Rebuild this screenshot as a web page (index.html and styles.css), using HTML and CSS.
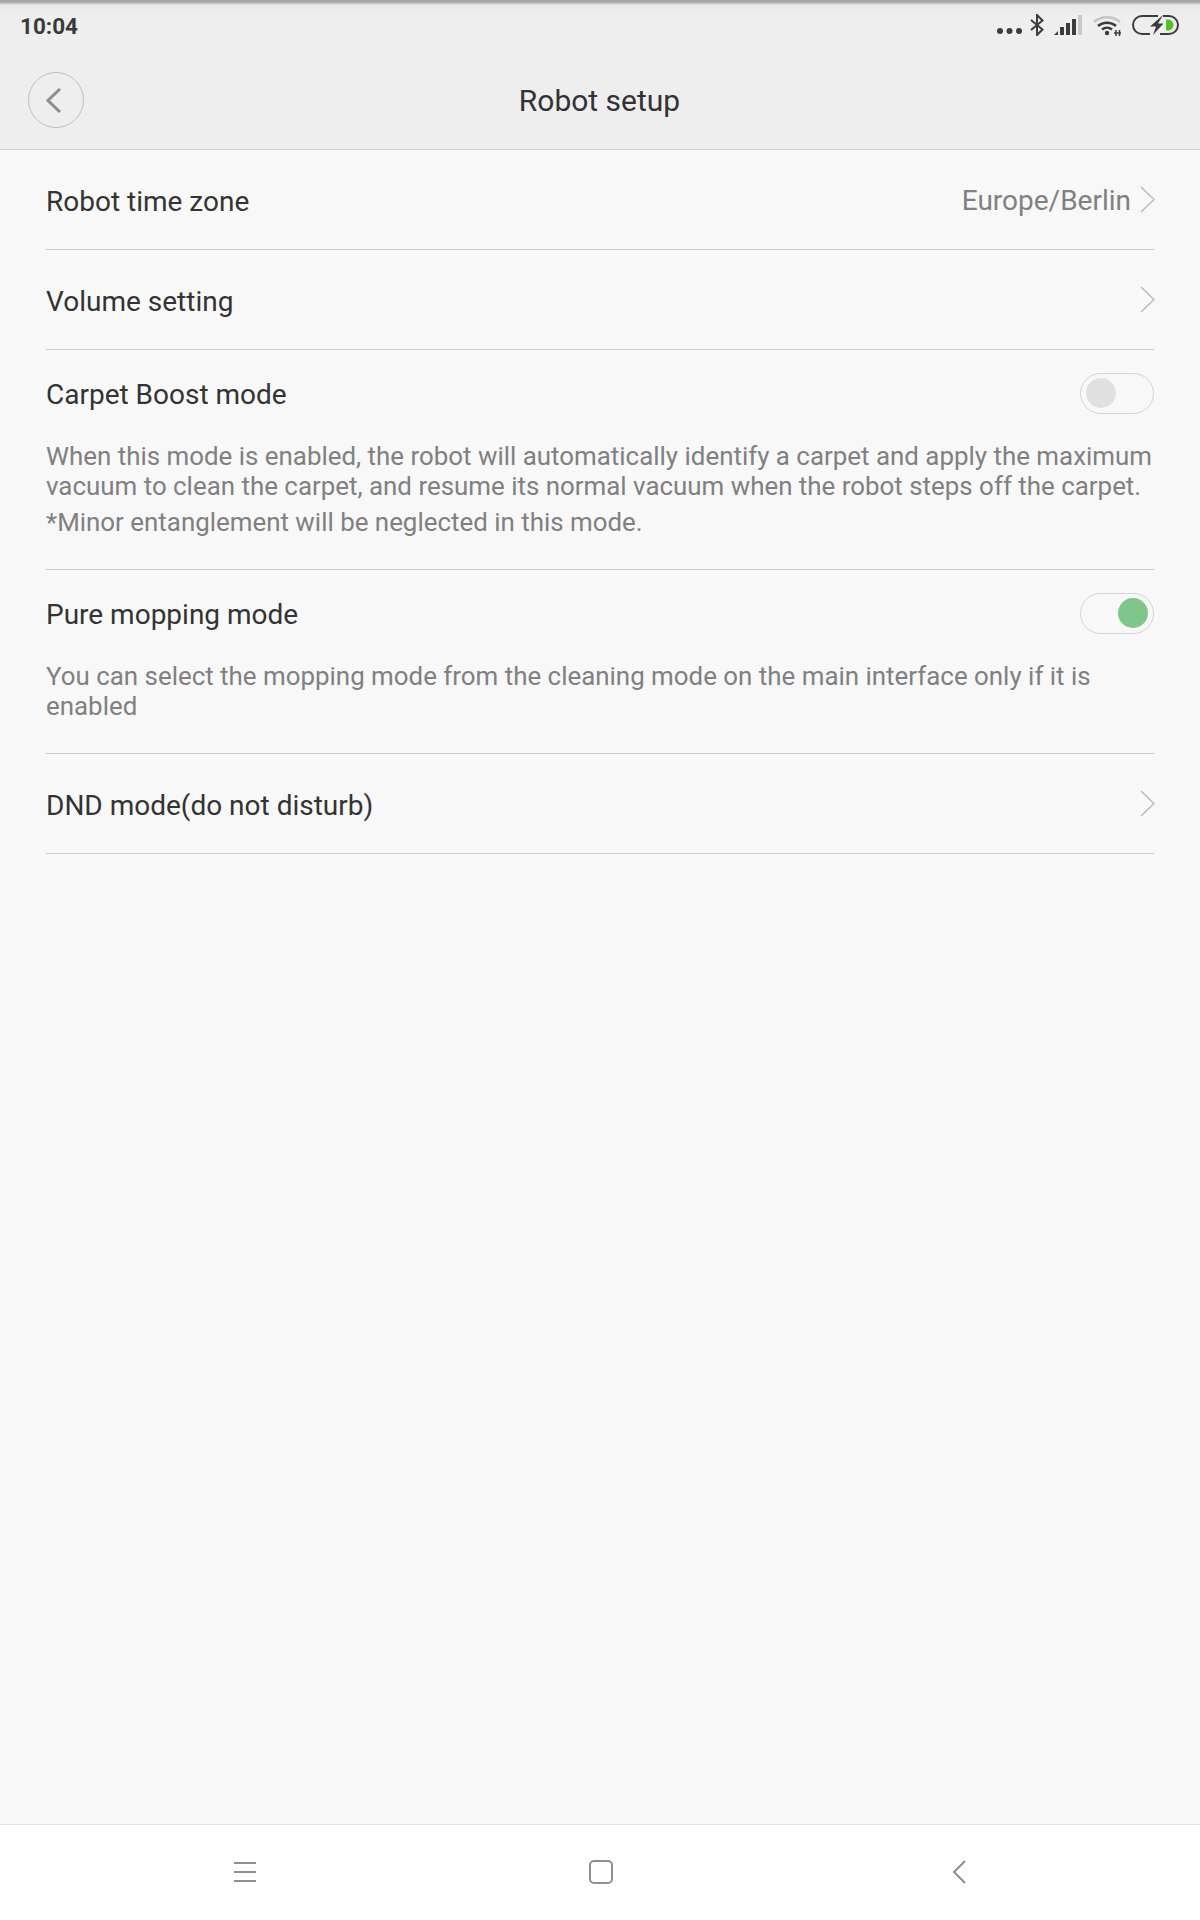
FILE: index.html
```html
<!DOCTYPE html>
<html>
<head>
<meta charset="UTF-8">
<title>Robot setup</title>
<link rel="stylesheet" href="styles.css">
</head>
<body>
	<div class="top">
		<div class="status">
			<span class="time">10:04</span>
			<div class="status-icons">
				<svg class="ic-dots" width="25" height="6" viewBox="0 0 25 6"><circle cx="3" cy="3" r="3" /><circle cx="12.500" cy="3" r="3" /><circle cx="22" cy="3" r="3" /></svg>
				<svg class="ic-bt" width="14" height="22" viewBox="0 0 14 22"><path d="M1 6 L12.500 15.500 L7 21 V1 L12.500 6.500 L1 16" fill="none" stroke="#3c3c3c" stroke-width="2" /></svg>
				<svg class="ic-signal" width="28" height="20" viewBox="0 0 28 20">
					<path d="M0 20 L4 16 V20 Z" fill="#3c3c3c" /><rect x="6" y="12" width="4" height="8" fill="#3c3c3c" /><rect x="12" y="8" width="4" height="12" fill="#3c3c3c" /><rect x="18" y="4" width="4" height="16" fill="#3c3c3c" /><rect x="24" y="0" width="4" height="20" fill="#c8c8c8" />
				</svg>
				<svg class="ic-wifi" width="28" height="21" viewBox="0 0 28 21">
					<path d="M1 7 C8 0.500 20 0.500 27 7" fill="none" stroke="#c4c4c4" stroke-width="2.500" />
					<path d="M5 11 C10 6.500 18 6.500 23 11" fill="none" stroke="#3c3c3c" stroke-width="2.500" />
					<path d="M9 14.500 C12 12 16 12 19 14.500" fill="none" stroke="#3c3c3c" stroke-width="2.500" />
					<circle cx="14" cy="18" r="2.200" fill="#3c3c3c" />
					<path d="M23 15 V21 M26.500 15 V21 M21 18 H28" fill="none" stroke="#3c3c3c" stroke-width="1.500" />
				</svg>
				<svg class="ic-batt" width="47" height="20" viewBox="0 0 47 20">
					<path d="M31 1 H37 A9 9 0 0 1 37 19 H28 M18 19 H10 A9 9 0 0 1 10 1 H26" fill="none" stroke="#3c3c3c" stroke-width="2" />
					<path d="M31 0 L18 11.500 H24 L21 20 L31.500 8.500 H26 Z" fill="#3c3c3c" />
					<path d="M34 4.500 H36 A5.500 5.500 0 0 1 36 15.500 H34 Z" fill="#4fc41e" />
				</svg>
			</div>
		</div>
		<div class="titlebar">
			<div class="back">
				<svg width="15" height="25" viewBox="0 0 15 25"><path d="M14 1 L2 12.500 L14 24" fill="none" stroke="#8e8e8e" stroke-width="3" /></svg>
			</div>
			<div class="title">Robot setup</div>
		</div>
	</div>

	<div class="list">
		<div class="row">
			<span class="label">Robot time zone</span>
			<div class="right">
				<span class="value">Europe/Berlin</span>
				<svg class="arrow" width="15" height="27" viewBox="0 0 15 27"><path d="M1 1 L14 13.500 L1 26" /></svg>
			</div>
		</div>
		<div class="row">
			<span class="label">Volume setting</span>
			<div class="right">
				<svg class="arrow" width="15" height="27" viewBox="0 0 15 27"><path d="M1 1 L14 13.500 L1 26" /></svg>
			</div>
		</div>
		<div class="row-tall row-carpet">
			<div class="row-head">
				<span class="label">Carpet Boost mode</span>
				<div class="switch"><div class="knob"></div></div>
			</div>
			<p class="desc">When this mode is enabled, the robot will automatically identify a carpet and apply the maximum vacuum to clean the carpet, and resume its normal vacuum when the robot steps off the carpet.</p>
			<p class="desc desc-note">*Minor entanglement will be neglected in this mode.</p>
		</div>
		<div class="row-tall row-mop">
			<div class="row-head">
				<span class="label">Pure mopping mode</span>
				<div class="switch on"><div class="knob"></div></div>
			</div>
			<p class="desc">You can select the mopping mode from the cleaning mode on the main interface only if it is enabled</p>
		</div>
		<div class="row">
			<span class="label">DND mode(do not disturb)</span>
			<div class="right">
				<svg class="arrow" width="15" height="27" viewBox="0 0 15 27"><path d="M1 1 L14 13.500 L1 26" /></svg>
			</div>
		</div>
	</div>

	<div class="navbar">
		<svg width="22" height="20" viewBox="0 0 22 20"><path d="M0 1 H22 M0 10 H22 M0 19 H22" fill="none" stroke="#8f8f8f" stroke-width="2" /></svg>
		<svg class="nav-home" width="24" height="24" viewBox="0 0 24 24"><rect x="1" y="1" width="22" height="22" rx="4" fill="none" stroke="#8f8f8f" stroke-width="2" /></svg>
		<svg width="14" height="24" viewBox="0 0 14 24"><path d="M13 1 L2 12 L13 23" fill="none" stroke="#8f8f8f" stroke-width="2" /></svg>
	</div>
</body>
</html>
```

FILE: styles.css
```css
html, body { margin: 0; padding: 0; }
body { width: 1200px; height: 1920px; background: #f8f8f8; font-family: Roboto, "Noto Sans", sans-serif; display: flex; flex-direction: column; overflow: hidden; }

/* status bar + title */
.top { height: 147px; padding-top: 2px; background: linear-gradient(#a6a6a6 0, #a6a6a6 2px, #e6e6e6 5px, #eeeeee 14px); border-bottom: 1px solid #cfcfcf; }
.status { height: 48px; display: flex; justify-content: space-between; align-items: center; padding: 0 21px 0 20px; }
.time { font-size: 22.500px; font-weight: 700; color: #3a3a3a; }
.status-icons { display: flex; align-items: center; padding-bottom: 2px; }
.ic-dots { fill: #3c3c3c; margin-top: 12px; }
.ic-bt { margin-left: 8px; }
.ic-signal { margin-left: 10px; }
.ic-wifi { margin-left: 11px; }
.ic-batt { margin-left: 11px; }

.titlebar { height: 99px; position: relative; display: flex; align-items: center; justify-content: center; }
.title { font-size: 30px; color: #333333; padding-top: 2px; margin-left: -1px; }
.back { position: absolute; left: 28px; top: 22px; width: 54px; height: 54px; border: 1px solid #bdbdbd; border-radius: 50%; display: flex; align-items: center; justify-content: center; }
.back svg { margin-right: 5px; }

/* list */
.list { flex: 1; padding: 0 46px; }
.row { height: 99px; border-bottom: 1px solid #cccccc; display: flex; justify-content: space-between; align-items: center; }
.label { font-size: 28px; color: #333333; padding-top: 3px; }
.right { display: flex; align-items: center; gap: 9px; margin-right: -1px; }
.value { font-size: 28px; color: #808080; padding-top: 2px; }
.arrow { fill: none; stroke: #bbbbbb; stroke-width: 1.500; }

.row-tall { border-bottom: 1px solid #cccccc; box-sizing: border-box; padding-top: 22px; }
.row-carpet { height: 220px; }
.row-mop { height: 184px; }
.row-head { height: 42px; display: flex; justify-content: space-between; align-items: center; }
.desc { margin: 0; font-size: 25.900px; line-height: 30px; color: #808080; }
.row-head + .desc { margin-top: 27px; }
.desc-note { margin-top: 6px; }

.switch { width: 62px; height: 39px; border: 1px solid #d4d4d4; border-radius: 21px; display: flex; align-items: center; padding: 0 5px; }
.knob { width: 30px; height: 30px; border-radius: 50%; background: #e0e0e0; }
.switch.on { justify-content: flex-end; }
.switch.on .knob { background: #7fc68a; }

/* bottom nav */
.navbar { height: 93px; padding: 0 0 2px 66px; background: #ffffff; border-top: 1px solid #e4e4e4; display: grid; grid-template-columns: repeat(3, 357px); justify-items: center; align-items: center; }
.nav-home { margin-right: 2px; }
```
